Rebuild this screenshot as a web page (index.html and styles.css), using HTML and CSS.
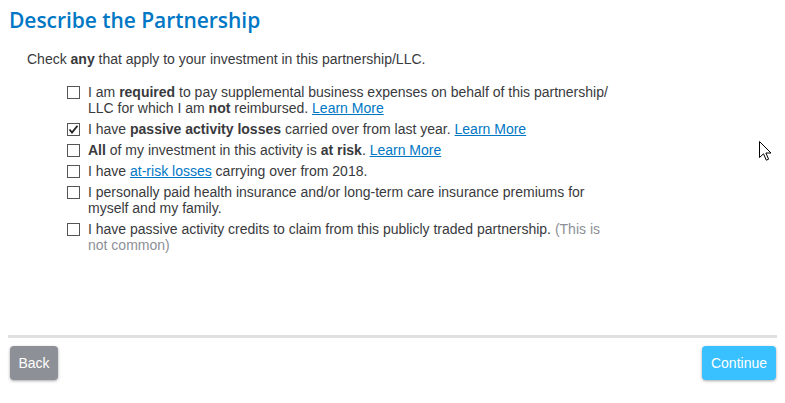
FILE: index.html
```html
<!DOCTYPE html>
<html>
<head>
<meta charset="utf-8">
<link rel="stylesheet" href="styles.css">
</head>
<body>
<div class="page">
  <h1 class="title">Describe the Partnership</h1>
  <p class="intro">Check <b>any</b> that apply to your investment in this partnership/LLC.</p>
  <ul class="options">
    <li class="opt"><span class="box"></span><span class="label">I am <b>required</b> to pay supplemental business expenses on behalf of this partnership/<wbr>LLC for which I am <b>not</b> reimbursed. <a href="#">Learn More</a></span></li>
    <li class="opt"><span class="box checked"><svg viewBox="0 0 13 13" width="13" height="13"><path d="M2.5 6.5 L5 9.5 L10.5 2.8" fill="none" stroke="#222" stroke-width="1.8"/></svg></span><span class="label">I have <b>passive activity losses</b> carried over from last year. <a href="#">Learn More</a></span></li>
    <li class="opt"><span class="box"></span><span class="label"><b>All</b> of my investment in this activity is <b>at risk</b>. <a href="#">Learn More</a></span></li>
    <li class="opt"><span class="box"></span><span class="label">I have <a href="#">at-risk losses</a> carrying over from 2018.</span></li>
    <li class="opt"><span class="box"></span><span class="label">I personally paid health insurance and/or long-term care insurance premiums for myself and my family.</span></li>
    <li class="opt"><span class="box"></span><span class="label">I have passive activity credits to claim from this publicly traded partnership. <span class="muted">(This is not common)</span></span></li>
  </ul>
  <div class="footer">
    <button class="btn back">Back</button>
    <button class="btn continue">Continue</button>
  </div>
</div>
<svg class="cursor" width="14" height="21" viewBox="0 0 14 21"><path d="M0.5 0.5 L0.5 16.5 L4.5 12.8 L7.3 19.2 L9.6 18.2 L6.9 12 L12 12 Z" fill="#fff" stroke="#000" stroke-width="1"/></svg>
</body>
</html>
```
FILE: styles.css
```css
* { box-sizing: border-box; }
html, body { margin: 0; padding: 0; background: #fff; }
body { font-family: "Liberation Sans", Arial, sans-serif; color: #393a3d; position: relative; width: 785px; height: 403px; overflow: hidden; }
.page { padding: 6px 8px 0 8px; display: flex; flex-direction: column; }
.title { margin: 0 0 0 1px; font-family: "Open Sans", "Noto Sans", sans-serif; font-weight: 600; font-size: 21px; line-height: 28px; color: #0077c5; letter-spacing: -0.05px; }
.intro { margin: 16px 0 0 19px; font-size: 14px; line-height: 18px; }
.intro b { font-weight: bold; }
.options { list-style: none; margin: 16px 0 0 0; padding: 0 0 0 59px; display: flex; flex-direction: column; gap: 5px; }
.opt { display: flex; align-items: flex-start; font-size: 14px; line-height: 16px; }
.box { flex: none; width: 13px; height: 13px; border: 1px solid #555; margin: 2px 8px 0 0; background: #fff; display: flex; }
.box svg { margin: -1px; }
.label { width: 525px; }
.label b { font-weight: bold; }
a { color: #0077c5; text-decoration: underline; }
.muted { color: #8d9096; }
.footer { margin-top: 82px; border-top: 3px solid #e0e0e0; display: flex; justify-content: space-between; padding: 8px 1px 0 2px; }
.btn { border: none; border-radius: 4px; color: #fff; font-family: "Liberation Sans", Arial, sans-serif; font-size: 14px; height: 34px; padding: 0; box-shadow: 0 1px 3px rgba(0,0,0,0.35); }
.back { background: #8d9096; width: 48px; }
.continue { background: #38c0ff; width: 74px; }
.cursor { position: absolute; left: 759px; top: 141px; }
```
